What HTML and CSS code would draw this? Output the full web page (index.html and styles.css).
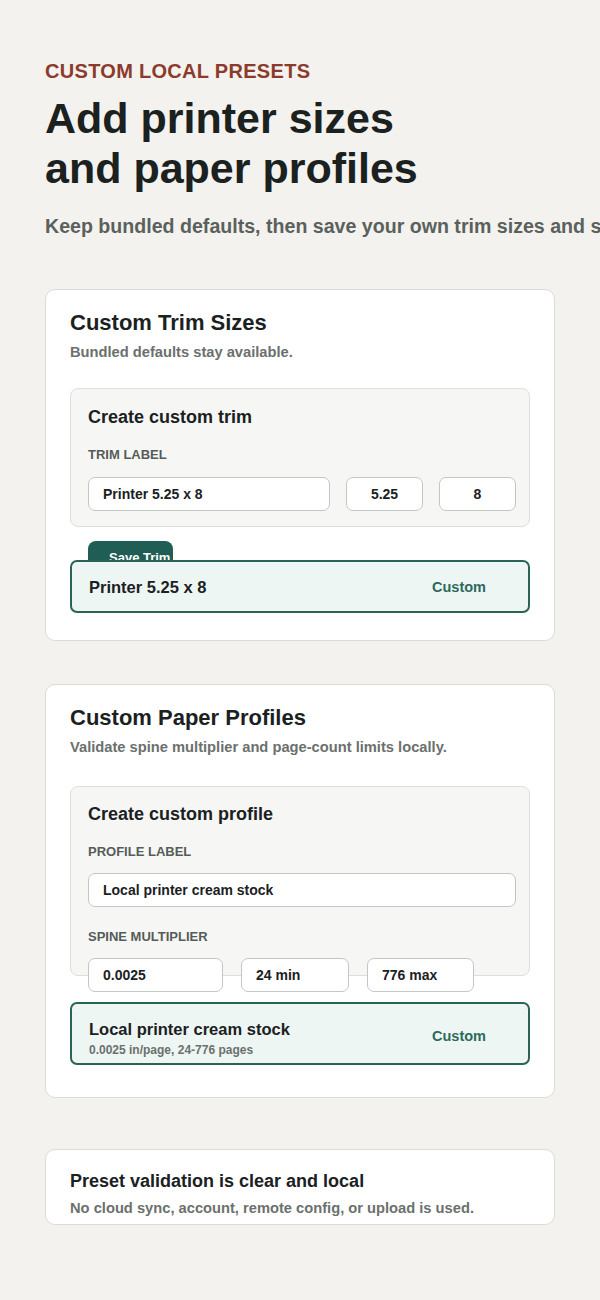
FILE: index.html
```html
<!DOCTYPE html>
<html lang="en">
<head>
  <meta charset="UTF-8" />
  <meta name="viewport" content="width=device-width, initial-scale=1.0" />
  <title>Custom Local Presets</title>
  <link rel="stylesheet" href="styles.css">
</head>
<body>
  <main class="page">
    <header class="intro">
      <p class="eyebrow">Custom local presets</p>
      <h1>Add printer sizes and paper profiles</h1>
      <p class="lede">Keep bundled defaults, then save your own trim sizes and stock profiles on this device.</p>
    </header>

    <!-- Trim sizes -->
    <section class="card">
      <h2>Custom Trim Sizes</h2>
      <p class="card-note">Bundled defaults stay available.</p>

      <form class="panel" id="trimForm">
        <h3>Create custom trim</h3>
        <label class="field-label" for="trimLabel">Trim label</label>
        <div class="trim-row">
          <input type="text" id="trimLabel" value="Printer 5.25 x 8" />
          <input type="text" class="num" id="trimWidth" value="5.25" />
          <input type="text" class="num" id="trimHeight" value="8" />
        </div>
      </form>
      <div class="form-actions">
        <button type="submit" form="trimForm" class="save-btn">Save Trim</button>
      </div>

      <div class="preset-item">
        <div class="preset-name">Printer 5.25 x 8</div>
        <span class="preset-tag">Custom</span>
      </div>
    </section>

    <!-- Paper profiles -->
    <section class="card card-profiles">
      <h2>Custom Paper Profiles</h2>
      <p class="card-note">Validate spine multiplier and page-count limits locally.</p>

      <form class="panel panel-profile" id="profileForm">
        <h3>Create custom profile</h3>
        <label class="field-label" for="profileLabel">Profile label</label>
        <input type="text" class="wide" id="profileLabel" value="Local printer cream stock" />
        <label class="field-label spine-label" for="spine">Spine multiplier</label>
        <div class="spine-row">
          <input type="text" id="spine" value="0.0025" />
          <input type="text" id="minPages" value="24 min" />
          <input type="text" id="maxPages" value="776 max" />
        </div>
      </form>

      <div class="preset-item preset-item-tall">
        <div>
          <div class="preset-name">Local printer cream stock</div>
          <div class="preset-meta">0.0025 in/page, 24-776 pages</div>
        </div>
        <span class="preset-tag">Custom</span>
      </div>
    </section>

    <section class="card card-compact">
      <h2>Preset validation is clear and local</h2>
      <p class="card-note">No cloud sync, account, remote config, or upload is used.</p>
    </section>
  </main>
</body>
</html>
```

FILE: styles.css
```css
* {
  box-sizing: border-box;
}
html, body {
  overflow-x: hidden;
}
body {
  margin: 0;
  background: #f3f2ee;
  color: #1b211f;
  font-family: "Liberation Sans", Arial, sans-serif;
}
.page {
  padding: 59px 45px 60px;
}

/* intro */
.eyebrow {
  margin: 0;
  font-size: 20px;
  line-height: 24px;
  font-weight: 700;
  letter-spacing: 0.3px;
  color: #8b3b2c;
  text-transform: uppercase;
}
.intro h1 {
  margin: 10px 0 0;
  max-width: 420px;
  font-size: 43px;
  line-height: 50px;
  font-weight: 700;
}
.lede {
  margin: 21px 0 0;
  font-size: 19.6px;
  line-height: 24px;
  font-weight: 700;
  color: #5a615d;
  white-space: nowrap; /* runs off the edge like the original */
}

/* cards */
.card {
  margin-top: 51px;
  background: #fff;
  border: 1px solid #dddbd5;
  border-radius: 10px;
  padding: 19px 24px 27px;
}
.card h2 {
  margin: 0;
  font-size: 22px;
  line-height: 28px;
}
.card-note {
  margin: 5px 0 0;
  font-size: 14.7px;
  line-height: 20px;
  font-weight: 700;
  color: #6b706d;
}
.card-profiles {
  margin-top: 43px;
  padding-bottom: 32px;
}
.card-compact {
  margin-top: 51px;
  padding-bottom: 6px;
}
.card-compact h2 {
  font-size: 18px;
  line-height: 24px;
}

/* form panel */
.panel {
  margin: 26px 0 0;
  background: #f6f7f5;
  border: 1px solid #dcdfdb;
  border-radius: 8px;
  padding: 16px 13px 15px 17px;
}
.panel h3 {
  margin: 0;
  font-size: 18px;
  line-height: 24px;
}
.field-label {
  display: block;
  margin-top: 18px;
  font-size: 13px;
  line-height: 16px;
  font-weight: 700;
  color: #555c58;
  text-transform: uppercase;
}
.panel input {
  height: 34px;
  width: 100%;
  border: 1.5px solid #c3c7c4;
  border-radius: 7px;
  background: #fff;
  padding: 0 14px;
  font-family: inherit;
  font-size: 14px;
  font-weight: 700;
  color: #1b211f;
}
.panel input.num {
  text-align: center;
}
.trim-row {
  display: grid;
  grid-template-columns: 242px 77px 77px;
  gap: 16px;
  margin-top: 14px;
}
.panel-profile {
  margin-top: 29px;
  height: 190px; /* fixed height, last row spills out */
  padding-top: 15px;
}
.panel .wide {
  display: block;
  margin-top: 13px;
}
.spine-label {
  margin-top: 22px;
}
.spine-row {
  display: grid;
  grid-template-columns: 135px 108px 107px;
  gap: 18px;
  margin-top: 13px;
}

/* save button, partly covered by the list */
.form-actions {
  height: 19px;
  margin-top: 14px;
  padding-left: 18px;
}
.save-btn {
  width: 85px;
  height: 32px;
  padding: 0 0 0 21px;
  border: none;
  border-radius: 8px;
  background: #1f5d55;
  color: #fff;
  font-family: inherit;
  font-size: 13px;
  font-weight: 700;
  text-align: left;
  white-space: nowrap;
  cursor: pointer;
}

/* saved preset rows */
.preset-item {
  position: relative;
  display: flex;
  justify-content: space-between;
  align-items: center;
  min-height: 53px;
  padding: 0 42px 0 17px;
  background: #eef6f4;
  border: 2px solid #2a6458;
  border-radius: 7px;
}
.preset-item-tall {
  margin-top: 26px;
  min-height: 63px;
  padding-top: 15px;
  padding-bottom: 5px;
}
.preset-item-tall .preset-tag {
  margin-bottom: 6px;
}
.preset-name {
  font-size: 16.5px;
  line-height: 20px;
  font-weight: 700;
}
.preset-meta {
  margin-top: 4px;
  font-size: 12px;
  line-height: 15px;
  font-weight: 700;
  color: #6b706d;
}
.preset-tag {
  font-size: 14.5px;
  font-weight: 700;
  color: #2b6a5d;
}
```
